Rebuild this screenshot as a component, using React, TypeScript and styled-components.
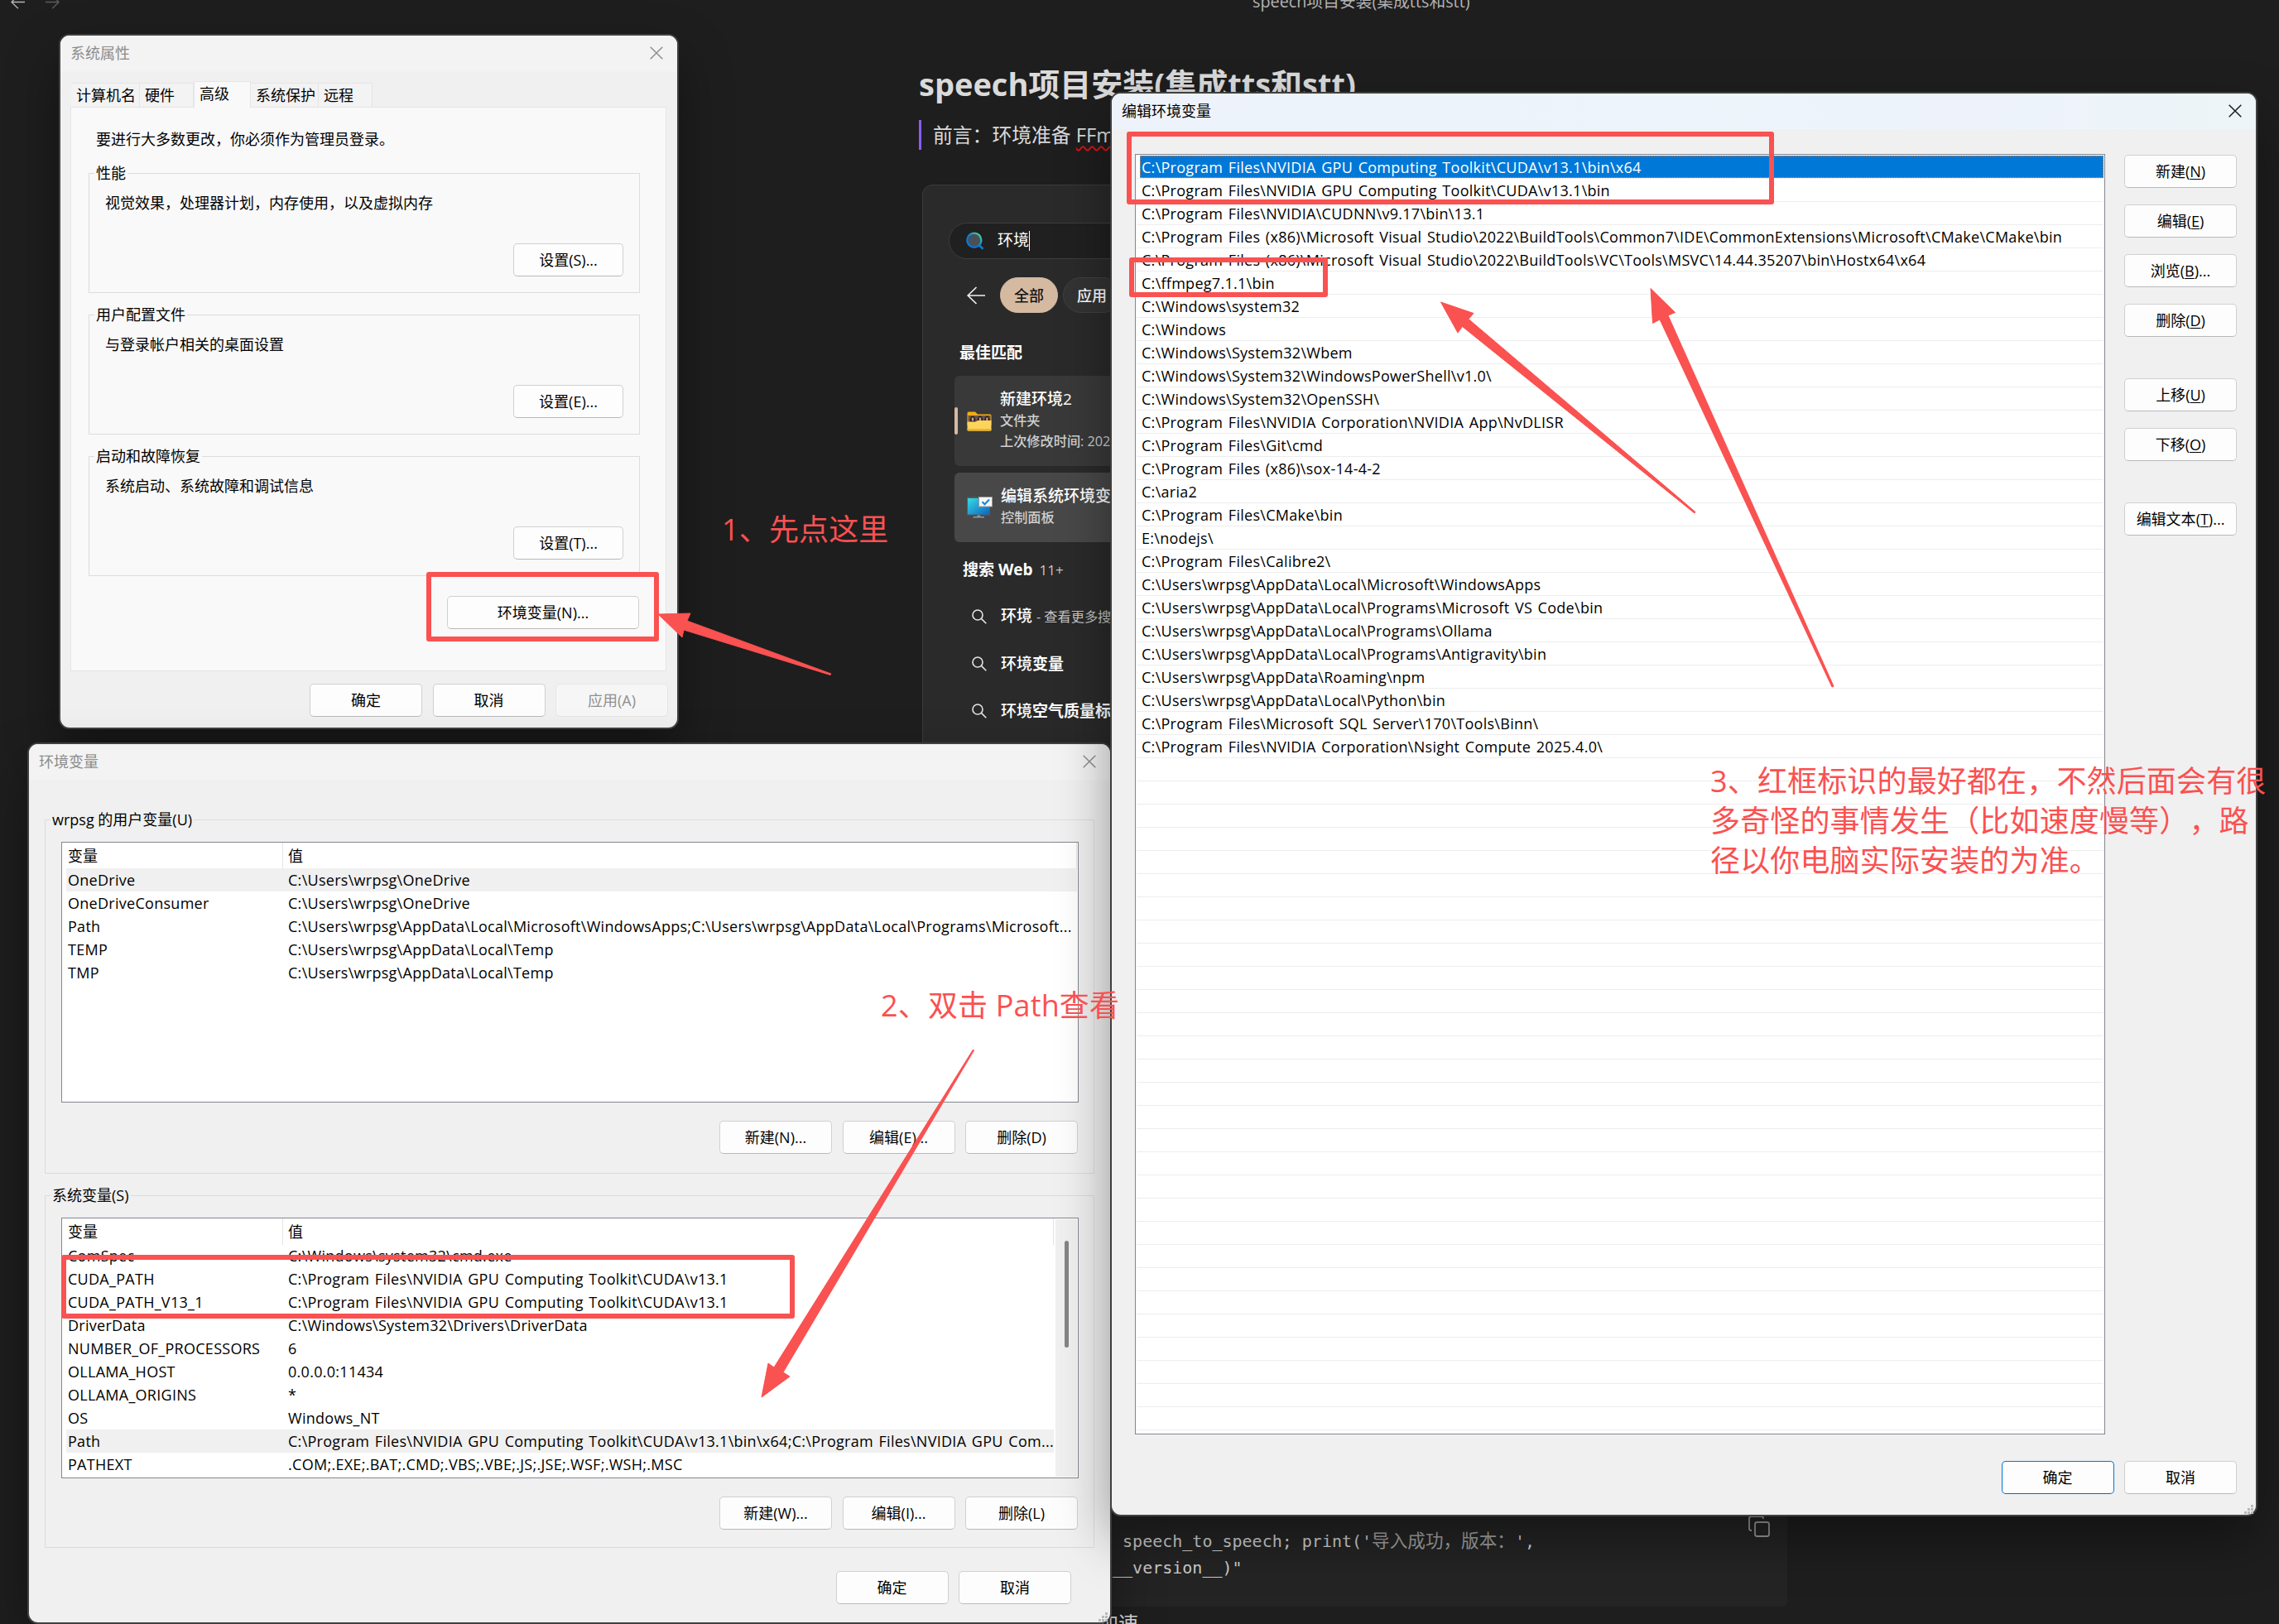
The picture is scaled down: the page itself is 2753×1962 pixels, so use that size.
import React, { useState } from "react";
import styled, { createGlobalStyle } from "styled-components";

// 用户变量 / 系统变量 / Path 数据 -----------------------------------------
type Variable = { name: string; value: string };

const UserVariables: Variable[] = [
  { name: "OneDrive", value: "C:\\Users\\wrpsg\\OneDrive" },
  { name: "OneDriveConsumer", value: "C:\\Users\\wrpsg\\OneDrive" },
  {
    name: "Path",
    value:
      "C:\\Users\\wrpsg\\AppData\\Local\\Microsoft\\WindowsApps;C:\\Users\\wrpsg\\AppData\\Local\\Programs\\Microsoft...",
  },
  { name: "TEMP", value: "C:\\Users\\wrpsg\\AppData\\Local\\Temp" },
  { name: "TMP", value: "C:\\Users\\wrpsg\\AppData\\Local\\Temp" },
];

const SystemVariables: Variable[] = [
  { name: "ComSpec", value: "C:\\Windows\\system32\\cmd.exe" },
  {
    name: "CUDA_PATH",
    value: "C:\\Program Files\\NVIDIA GPU Computing Toolkit\\CUDA\\v13.1",
  },
  {
    name: "CUDA_PATH_V13_1",
    value: "C:\\Program Files\\NVIDIA GPU Computing Toolkit\\CUDA\\v13.1",
  },
  { name: "DriverData", value: "C:\\Windows\\System32\\Drivers\\DriverData" },
  { name: "NUMBER_OF_PROCESSORS", value: "6" },
  { name: "OLLAMA_HOST", value: "0.0.0.0:11434" },
  { name: "OLLAMA_ORIGINS", value: "*" },
  { name: "OS", value: "Windows_NT" },
  {
    name: "Path",
    value:
      "C:\\Program Files\\NVIDIA GPU Computing Toolkit\\CUDA\\v13.1\\bin\\x64;C:\\Program Files\\NVIDIA GPU Com...",
  },
  {
    name: "PATHEXT",
    value: ".COM;.EXE;.BAT;.CMD;.VBS;.VBE;.JS;.JSE;.WSF;.WSH;.MSC",
  },
];

const PathEntries = [
  "C:\\Program Files\\NVIDIA GPU Computing Toolkit\\CUDA\\v13.1\\bin\\x64",
  "C:\\Program Files\\NVIDIA GPU Computing Toolkit\\CUDA\\v13.1\\bin",
  "C:\\Program Files\\NVIDIA\\CUDNN\\v9.17\\bin\\13.1",
  "C:\\Program Files (x86)\\Microsoft Visual Studio\\2022\\BuildTools\\Common7\\IDE\\CommonExtensions\\Microsoft\\CMake\\CMake\\bin",
  "C:\\Program Files (x86)\\Microsoft Visual Studio\\2022\\BuildTools\\VC\\Tools\\MSVC\\14.44.35207\\bin\\Hostx64\\x64",
  "C:\\ffmpeg7.1.1\\bin",
  "C:\\Windows\\system32",
  "C:\\Windows",
  "C:\\Windows\\System32\\Wbem",
  "C:\\Windows\\System32\\WindowsPowerShell\\v1.0\\",
  "C:\\Windows\\System32\\OpenSSH\\",
  "C:\\Program Files\\NVIDIA Corporation\\NVIDIA App\\NvDLISR",
  "C:\\Program Files\\Git\\cmd",
  "C:\\Program Files (x86)\\sox-14-4-2",
  "C:\\aria2",
  "C:\\Program Files\\CMake\\bin",
  "E:\\nodejs\\",
  "C:\\Program Files\\Calibre2\\",
  "C:\\Users\\wrpsg\\AppData\\Local\\Microsoft\\WindowsApps",
  "C:\\Users\\wrpsg\\AppData\\Local\\Programs\\Microsoft VS Code\\bin",
  "C:\\Users\\wrpsg\\AppData\\Local\\Programs\\Ollama",
  "C:\\Users\\wrpsg\\AppData\\Local\\Programs\\Antigravity\\bin",
  "C:\\Users\\wrpsg\\AppData\\Roaming\\npm",
  "C:\\Users\\wrpsg\\AppData\\Local\\Python\\bin",
  "C:\\Program Files\\Microsoft SQL Server\\170\\Tools\\Binn\\",
  "C:\\Program Files\\NVIDIA Corporation\\Nsight Compute 2025.4.0\\",
];

// 列表下面的空行
const EMPTY_ROWS = 29;

const Groups = [
  { title: "性能", text: "视觉效果，处理器计划，内存使用，以及虚拟内存", button: "设置(S)..." },
  { title: "用户配置文件", text: "与登录帐户相关的桌面设置", button: "设置(E)..." },
  { title: "启动和故障恢复", text: "系统启动、系统故障和调试信息", button: "设置(T)..." },
];

const Tabs = [
  { label: "计算机名", width: 83 },
  { label: "硬件", width: 65 },
  { label: "高级", width: 69 },
  { label: "系统保护", width: 82 },
  { label: "远程", width: 65 },
];
// ------------------------------------------------------------------------

const CloseIcon = ({ color }: { color: string }) => (
  <svg width="16" height="16" viewBox="0 0 16 16">
    <path d="M0.7 0.7L15.3 15.3M15.3 0.7L0.7 15.3" stroke={color} strokeWidth="1.5" />
  </svg>
);

const GripIcon = () => (
  <svg width="11" height="11" viewBox="0 0 11 11" fill="#b9b9b9">
    <path d="M8 0h3v3h-3zM4 4h3v3h-3zM8 4h3v3h-3zM0 8h3v3h-3zM4 8h3v3h-3zM8 8h3v3h-3z" />
  </svg>
);

const SearchIcon = () => (
  <svg width="18" height="18" viewBox="0 0 18 18" fill="none" stroke="#e4e4e4" strokeWidth="1.6">
    <circle cx="7" cy="7" r="6" />
    <path d="M11.4 11.4L17.3 17.3" />
  </svg>
);

const BingSearchIcon = () => (
  <svg width="22" height="22" viewBox="0 0 22 22" fill="none">
    <defs>
      <linearGradient id="lens" x1="0" y1="1" x2="1" y2="0">
        <stop offset="0.45" stopColor="#0a78d4" />
        <stop offset="0.75" stopColor="#2fb6b0" />
        <stop offset="1" stopColor="#62e07a" />
      </linearGradient>
    </defs>
    <path d="M15.5 16L20.5 20.8" stroke="#0a78d4" strokeWidth="2.8" />
    <circle cx="9.8" cy="10.2" r="8.6" fill="#48505a" stroke="url(#lens)" strokeWidth="2.2" />
  </svg>
);

const FolderIcon = () => (
  <svg width="30" height="24" viewBox="0 0 30 24">
    <path d="M0.5 2q0-1.5 1.5-1.5h8l3 3h15q1.5 0 1.5 1.500v12h-29z" fill="#f2ac16" />
    <path d="M1.500 5h27v9h-27z" fill="#6b5547" />
    <path d="M4 13q-1-7 3-7.500q4 .5 3 7.500zM13 13q-1-7 3-7.500q4 .5 3 7.500zM21.500 13q-1-7 3-7.500q3.500 .5 3 7.500z" fill="#2c211f" />
    <path d="M5.800 7.500h2.400v4h-2.400zM14.800 7.500h2.400v4h-2.400zM23.300 7.500h2.200v4h-2.200z" fill="#c79f8c" />
    <path d="M0.500 12.500h10l3-1.500h16v11q0 1.500-1.500 1.500h-26q-1.500 0-1.500-1.500z" fill="#fcd45c" />
    <path d="M0.500 21h29v1.200q0 1.300-1.500 1.300h-26q-1.500 0-1.500-1.300z" fill="#f0b52c" />
  </svg>
);

const MonitorIcon = () => (
  <svg width="31" height="26" viewBox="0 0 31 26">
    <defs>
      <linearGradient id="screen" x1="0" y1="0" x2="1" y2="1">
        <stop offset="0" stopColor="#35dbe6" />
        <stop offset="1" stopColor="#0d63bd" />
      </linearGradient>
    </defs>
    <rect x="0" y="0.500" width="28" height="22" rx="1" fill="#4f5f68" />
    <rect x="1" y="2" width="26" height="19.500" fill="url(#screen)" />
    <path d="M12.500 22.500h3.500v1.500h5v1.500h-13.500v-1.500h5z" fill="#8d9aa3" />
    <rect x="14.500" y="0.500" width="16" height="11.500" fill="#f6f6f6" stroke="#9a9a9a" />
    <path d="M18.500 6.200L21.500 9.200L27 3.500" fill="none" stroke="#1783d8" strokeWidth="2" />
  </svg>
);

const BackIcon = ({ color, size, flip }: { color: string; size: number; flip?: boolean }) => (
  <svg width={size} height={size} viewBox="0 0 22 22" fill="none" stroke={color} strokeWidth="1.7">
    <path
      d="M11.500 1L1.200 11L11.500 21M1.200 11H22"
      transform={flip ? "translate(22 0) scale(-1 1)" : undefined}
    />
  </svg>
);

const CopyIcon = () => (
  <svg width="26" height="26" viewBox="0 0 26 26" fill="none" stroke="#9b9b9b" strokeWidth="1.800">
    <rect x="8" y="8" width="17" height="17" rx="2.500" />
    <path d="M4 18H3.500Q1 18 1 15.500V3.500Q1 1 3.500 1H15.500Q18 1 18 3.500V4" />
  </svg>
);

const AccessLabel = ({ text, code, more }: { text: string; code: string; more?: boolean }) => (
  <span>
    {text}(<u>{code}</u>){more ? "..." : ""}
  </span>
);

type TableProps = { rows: Variable[]; active: number; scroll?: boolean };

const VariableTable: React.FC<TableProps> = ({ rows, active, scroll }) => (
  <Table>
    <TableMain>
      <TableHead>
        <HeadCell>变量</HeadCell>
        <HeadCell>值</HeadCell>
      </TableHead>
      {rows.map((row, index) => (
        <TableRow key={index} $active={index === active}>
          <span>{row.name}</span>
          <span>{row.value}</span>
        </TableRow>
      ))}
    </TableMain>
    {scroll && (
      <ScrollTrack>
        <ScrollThumb />
      </ScrollTrack>
    )}
  </Table>
);

const SystemProperties: React.FC = () => {
  const [selectedTab, setSelectedTab] = useState("高级");

  return (
    <SystemWindow>
      <TitleBar>
        系统属性
        <CloseIcon color="#8f8f8f" />
      </TitleBar>
      <TabBar>
        {Tabs.map((tab) => (
          <Tab
            key={tab.label}
            $width={tab.width}
            $selected={selectedTab === tab.label}
            onClick={() => setSelectedTab(tab.label)}
          >
            {tab.label}
          </Tab>
        ))}
      </TabBar>
      <TabPanel>
        <Notice>要进行大多数更改，你必须作为管理员登录。</Notice>
        {Groups.map((group) => (
          <SettingGroup key={group.title}>
            <Legend>{group.title}</Legend>
            <GroupText>{group.text}</GroupText>
            <ButtonRow $right={19}>
              <Button $width={133}>{group.button}</Button>
            </ButtonRow>
          </SettingGroup>
        ))}
        <ButtonRow $top={24} $right={32}>
          <Button $width={232}>环境变量(N)...</Button>
        </ButtonRow>
      </TabPanel>
      <ButtonRow $top={15} $right={11}>
        <Button>确定</Button>
        <Button>取消</Button>
        <Button disabled>应用(A)</Button>
      </ButtonRow>
    </SystemWindow>
  );
};

const EnvironmentVariables: React.FC = () => (
  <VariableWindow>
    <TitleBar>
      环境变量
      <CloseIcon color="#8f8f8f" />
    </TitleBar>
    <VariableBody>
      <VariableGroup $height={442}>
        <Legend>wrpsg 的用户变量(U)</Legend>
        <VariableTable rows={UserVariables} active={0} />
        <ButtonRow $top={22} $right={19}>
          <Button>新建(N)...</Button>
          <Button>编辑(E)...</Button>
          <Button>删除(D)</Button>
        </ButtonRow>
      </VariableGroup>
      <VariableGroup $height={440}>
        <Legend>系统变量(S)</Legend>
        <VariableTable rows={SystemVariables} active={8} scroll />
        <ButtonRow $top={22} $right={19}>
          <Button>新建(W)...</Button>
          <Button>编辑(I)...</Button>
          <Button>删除(L)</Button>
        </ButtonRow>
      </VariableGroup>
    </VariableBody>
    <ButtonRow $top={28} $right={47}>
      <Button>确定</Button>
      <Button>取消</Button>
    </ButtonRow>
    <Grip>
      <GripIcon />
    </Grip>
  </VariableWindow>
);

const EditPath: React.FC = () => {
  const [selected, setSelected] = useState(0);

  return (
    <PathWindow>
      <TitleBar $focused>
        编辑环境变量
        <CloseIcon color="#1c1c1c" />
      </TitleBar>
      <PathBody>
        <PathList>
          {PathEntries.map((entry, index) => (
            <PathRow key={entry} onClick={() => setSelected(index)}>
              <PathText $selected={index === selected}>{entry}</PathText>
            </PathRow>
          ))}
          {Array.from({ length: EMPTY_ROWS }, (_, index) => (
            <PathRow key={index} />
          ))}
        </PathList>
        <SideButtons>
          <ButtonColumn>
            <Button><AccessLabel text="新建" code="N" /></Button>
            <Button><AccessLabel text="编辑" code="E" /></Button>
            <Button><AccessLabel text="浏览" code="B" more /></Button>
            <Button><AccessLabel text="删除" code="D" /></Button>
          </ButtonColumn>
          <ButtonColumn>
            <Button><AccessLabel text="上移" code="U" /></Button>
            <Button><AccessLabel text="下移" code="O" /></Button>
          </ButtonColumn>
          <Button><AccessLabel text="编辑文本" code="T" more /></Button>
        </SideButtons>
      </PathBody>
      <ButtonRow $top={32} $right={23}>
        <Button $primary>确定</Button>
        <Button>取消</Button>
      </ButtonRow>
      <Grip>
        <GripIcon />
      </Grip>
    </PathWindow>
  );
};

// 笔记里嵌入的开始菜单搜索
const StartSearch: React.FC = () => (
  <StartPanel>
    <SearchBox>
      <BingSearchIcon />
      <SearchText>环境</SearchText>
    </SearchBox>
    <FilterRow>
      <BackIcon color="#f0f0f0" size={22} />
      <Pill $active>全部</Pill>
      <Pill>应用</Pill>
    </FilterRow>
    <PanelTitle>最佳匹配</PanelTitle>
    <ResultCard $height={109}>
      <Accent />
      <FolderIcon />
      <ResultInfo>
        <ResultName>新建环境2</ResultName>
        <ResultMeta>文件夹</ResultMeta>
        <ResultMeta>上次修改时间: 2026</ResultMeta>
      </ResultInfo>
    </ResultCard>
    <ResultCard $height={84} $hover>
      <Accent $hidden />
      <MonitorIcon />
      <ResultInfo>
        <ResultName>编辑系统环境变量</ResultName>
        <ResultMeta>控制面板</ResultMeta>
      </ResultInfo>
    </ResultCard>
    <WebTitle>
      搜索 Web <small>11+</small>
    </WebTitle>
    <WebRow>
      <SearchIcon />
      <span>
        环境 <small>- 查看更多搜</small>
      </span>
    </WebRow>
    <WebRow>
      <SearchIcon />
      <span>
        环境<b>变量</b>
      </span>
    </WebRow>
    <WebRow>
      <SearchIcon />
      <span>
        环境<b>空气质量标准</b>
      </span>
    </WebRow>
  </StartPanel>
);

const Note: React.FC = () => (
  <NotePage>
    <NoteBar>
      <BackIcon color="#b5b5b5" size={17} />
      <BackIcon color="#5c5c5c" size={17} flip />
      <NoteTab>speech项目安装(集成tts和stt)</NoteTab>
    </NoteBar>
    <NoteContent>
      <NoteTitle>speech项目安装(集成tts和stt)</NoteTitle>
      <Quote>
        前言：环境准备 <Misspelled>FFmpeg</Misspelled>
      </Quote>
      <StartSearch />
      <CodeBlock>
        <Code>
          <div>
            t speech_to_speech; print('<CodeText>导入成功，版本：</CodeText>',
          </div>
          <div>&nbsp;__version__)"</div>
        </Code>
        <CopyIcon />
      </CodeBlock>
      <NextLine>加速</NextLine>
    </NoteContent>
  </NotePage>
);

// 红框、箭头和说明文字
const Annotations: React.FC = () => (
  <>
    <Frame $x={515} $y={691} $w={281} $h={84} />
    <Frame $x={74} $y={1516} $w={886} $h={77} />
    <Frame $x={1361} $y={159} $w={782} $h={88} />
    <Frame $x={1364} $y={311} $w={240} $h={48} />
    <Arrows width="2753" height="1962" viewBox="0 0 2753 1962">
      <path d="M795 742L834 741L830 750L1004 814L1003 815.500L826 761L824 770Z" />
      <path d="M920 1688L928 1647L935 1652L1175.500 1268L1176.500 1269L946 1658L954 1663Z" />
      <path d="M1740.500 365L1780 378.500L1774 385.500L2048 618.500L2047 620L1766.500 394.500L1761 402Z" />
      <path d="M1994 348.500L2023.500 377.500L2015 381L2215 829L2213 830L2005 386L1996.500 390.500Z" />
    </Arrows>
    <Hint $x={872} $y={616}>1、先点这里</Hint>
    <Hint $x={1064} $y={1191}>2、双击 Path查看</Hint>
    <Hint $x={2066} $y={920}>
      3、红框标识的最好都在，不然后面会有很
      <br />
      多奇怪的事情发生（比如速度慢等），路
      <br />
      径以你电脑实际安装的为准。
    </Hint>
  </>
);

const App: React.FC = () => {
  return (
    <Desktop>
      <GlobalStyle />
      <Note />
      <SystemProperties />
      <EnvironmentVariables />
      <EditPath />
      <Annotations />
    </Desktop>
  );
};

export default App;

const GlobalStyle = createGlobalStyle`
  * {
    box-sizing: border-box;
  }

  body {
    margin: 0;
    overflow: hidden;
    background-color: #1e1e1e;
    font-family: "Open Sans", "Noto Sans CJK SC", sans-serif;
    font-size: 18px;
    line-height: 28px;
    text-spacing-trim: space-all;
    color: #000;
  }

  svg {
    flex-shrink: 0;
  }
`;

const Desktop = styled.div`
  position: relative;
  width: 2753px;
  height: 1962px;
  overflow: hidden;
  white-space: nowrap;
`;

// -------------------------------------------------------------------------------------------------------
// 笔记背景
const NotePage = styled.div`
  height: 100%;
  color: #dadada;
`;

// 顶部工具栏，只露出下半部分
const NoteBar = styled.div`
  height: 4px;
  display: flex;
  align-items: center;
  gap: 25px;
  padding-left: 13px;
`;

const NoteTab = styled.span`
  margin-left: 1416px;
  font-size: 19.8px;
  color: #b3b3b3;
`;

const NoteContent = styled.div`
  width: 2159px;
  padding-left: 1110px;
`;

const NoteTitle = styled.h1`
  margin: 72px 0 19px;
  font-size: 38px;
  font-weight: 700;
  line-height: 50px;
`;

const Quote = styled.div`
  height: 36px;
  padding-left: 14px;
  border-left: 3px solid #8a5cf5;
  font-size: 23.8px;
  line-height: 36px;
`;

const Misspelled = styled.span`
  text-decoration: underline wavy #e01010 1.5px;
  text-underline-offset: 4px;
`;

const CodeBlock = styled.div`
  display: flex;
  justify-content: space-between;
  height: 130px;
  margin-top: 588px;
  padding: 20px 21px 0 222px;
  border-radius: 6px;
  background-color: #242424;
`;

const Code = styled.div`
  padding-top: 15px;
  font-family: "DejaVu Sans Mono", "Noto Sans CJK SC", monospace;
  font-size: 20px;
  line-height: 31.5px;
  color: #cfcfcf;
`;

const CodeText = styled.span`
  font-size: 21.6px;
  color: #a2a2a2;
`;

const NextLine = styled.div`
  padding: 6px 0 0 217px;
  font-size: 24px;
`;

// -------------------------------------------------------------------------------------------------------
// 开始菜单搜索面板
const StartPanel = styled.div`
  width: 1045px;
  height: 1000px;
  margin: 42px 0 0 4px;
  padding: 45px 0 0 31px;
  border: 1px solid #3b3b3b;
  border-radius: 12px;
  background-color: #2a2a2a;
  color: #fff;
`;

const SearchBox = styled.div`
  display: flex;
  align-items: center;
  gap: 16px;
  width: 900px;
  height: 44px;
  padding-left: 20px;
  border: 1px solid #3d3d3d;
  border-radius: 22px;
  background-color: #202020;
`;

const SearchText = styled.span`
  height: 24px;
  line-height: 22px;
  font-size: 19px;
  border-right: 1.5px solid #fff;
`;

const FilterRow = styled.div`
  display: flex;
  align-items: center;
  gap: 6px;
  margin-top: 22px;
  padding-left: 22px;

  svg {
    margin-right: 12px;
  }
`;

const Pill = styled.div<{ $active?: boolean }>`
  display: flex;
  align-items: center;
  justify-content: center;
  width: 70px;
  height: 43px;
  border: 1px solid ${(props) => (props.$active ? "#d5baa1" : "#404040")};
  border-radius: 22px;
  background-color: ${(props) => (props.$active ? "#d5baa1" : "#333")};
  color: ${(props) => (props.$active ? "#161616" : "#fff")};
  font-weight: 500;
`;

const PanelTitle = styled.div`
  margin: 34px 0 14px 13px;
  font-size: 19px;
  font-weight: 700;
`;

const ResultCard = styled.div<{ $height: number; $hover?: boolean }>`
  display: flex;
  align-items: center;
  width: 880px;
  height: ${(props) => props.$height}px;
  margin: 0 0 8px 7px;
  border-radius: 6px;
  background-color: ${(props) => (props.$hover ? "#484848" : "#393939")};
`;

const Accent = styled.div<{ $hidden?: boolean }>`
  width: 4px;
  height: 33px;
  margin-right: 11px;
  border-radius: 2px;
  background-color: ${(props) => (props.$hidden ? "transparent" : "#d5baa1")};
`;

const ResultInfo = styled.div`
  margin-left: 10px;
  padding-bottom: 3px;
`;

const ResultName = styled.div`
  font-size: 19px;
  font-weight: 500;
`;

const ResultMeta = styled.div`
  font-size: 16.2px;
  font-weight: 500;
  line-height: 25px;
  color: #cfcfcf;
`;

const WebTitle = styled.div`
  margin: 19px 0 13px 17px;
  font-size: 19px;
  font-weight: 700;

  small {
    margin-left: 3px;
    font-size: 17px;
    font-weight: 400;
    color: #c4c4c4;
  }
`;

const WebRow = styled.div`
  display: flex;
  align-items: center;
  gap: 17px;
  height: 57px;
  padding-left: 28px;
  font-size: 19px;
  font-weight: 500;

  small {
    font-size: 16.2px;
    font-weight: 400;
    color: #c4c4c4;
  }
`;

// -------------------------------------------------------------------------------------------------------
// 窗口
const Window = styled.div`
  position: absolute;
  border-radius: 11px;
  background-color: #f0f0f0;
  box-shadow: 0 0 0 2px #404040, 0 28px 64px rgba(0, 0, 0, 0.4);
`;

const SystemWindow = styled(Window)`
  left: 73px;
  top: 43px;
  width: 745px;
  height: 836px;
`;

const VariableWindow = styled(Window)`
  left: 35px;
  top: 899px;
  width: 1306px;
  height: 1061px;
`;

const PathWindow = styled(Window)`
  left: 1343px;
  top: 113px;
  width: 1382px;
  height: 1717px;
`;

const TitleBar = styled.div<{ $focused?: boolean }>`
  display: flex;
  align-items: center;
  justify-content: space-between;
  height: 43px;
  padding: 0 17px 2px 12px;
  border-radius: 11px 11px 0 0;
  background: ${(props) =>
    props.$focused ? "linear-gradient(90deg, #eef3fb, #edf4fa 55%, #eef3fb 75%, #edf5f8)" : "#f3f3f3"};
  color: ${(props) => (props.$focused ? "#000" : "#8b8b8b")};
`;

const Button = styled.button<{ $width?: number; $primary?: boolean }>`
  display: flex;
  align-items: center;
  justify-content: center;
  width: ${(props) => props.$width ?? 136}px;
  height: 40px;
  padding: 0;
  border: 1px solid ${(props) => (props.$primary ? "#0078d4" : "#d0d0d0")};
  border-bottom-color: ${(props) => (props.$primary ? "#0067c0" : "#b9b9b9")};
  border-radius: 5px;
  background-color: #fdfdfd;
  font: inherit;
  color: #000;

  u {
    text-underline-offset: 2px;
  }

  &:disabled {
    border-color: #e6e6e6;
    background-color: #f6f6f6;
    color: #8f8f8f;
  }
`;

const ButtonRow = styled.div<{ $top?: number; $right?: number }>`
  display: flex;
  justify-content: flex-end;
  gap: 12.5px;
  margin-top: ${(props) => props.$top ?? 0}px;
  padding-right: ${(props) => props.$right ?? 0}px;
`;

const Grip = styled.div`
  position: absolute;
  right: 3px;
  bottom: 1px;
  display: flex;
`;

// -------------------------------------------------------------------------------------------------------
// 系统属性
const TabBar = styled.div`
  display: flex;
  align-items: flex-end;
  height: 43px;
  padding-left: 13px;
`;

const Tab = styled.div<{ $width: number; $selected: boolean }>`
  width: ${(props) => props.$width}px;
  height: ${(props) => (props.$selected ? 32 : 29)}px;
  margin-bottom: ${(props) => (props.$selected ? -1 : 0)}px;
  padding-left: 6px;
  border: 1px solid #e5e5e5;
  border-width: 1px 1px 0 ${(props) => (props.$selected ? 1 : 0)}px;
  background-color: ${(props) => (props.$selected ? "#f9f9f9" : "#f3f3f3")};
  line-height: 29px;
  z-index: ${(props) => (props.$selected ? 1 : 0)};
`;

const TabPanel = styled.div`
  height: 682px;
  margin: 0 13px 0 12px;
  padding: 24px 0 0 21px;
  border: 1px solid #e5e5e5;
  background-color: #f9f9f9;
`;

const Notice = styled.div`
  margin: 0 0 13px 9px;
`;

const Group = styled.fieldset`
  margin: 0 0 12px;
  padding: 0;
  border: 1px solid #dcdcdc;
`;

const SettingGroup = styled(Group)`
  width: 666px;
  height: 159px;

  &:last-of-type {
    margin-bottom: 0;
  }
`;

const Legend = styled.legend`
  height: 28px;
  margin-left: 6px;
  padding: 0 2px;
`;

const GroupText = styled.div`
  margin: 8px 0 35px 19px;
`;

// -------------------------------------------------------------------------------------------------------
// 环境变量
const VariableBody = styled.div`
  padding: 34px 19px 0;
`;

const VariableGroup = styled(Group)<{ $height: number }>`
  height: ${(props) => props.$height}px;

  &:last-child {
    margin-bottom: 0;
  }
`;

const Table = styled.div`
  display: flex;
  height: 315px;
  margin: 13px 18px 0 19px;
  border: 1px solid #828790;
  background-color: #fff;
`;

const TableMain = styled.div`
  flex: 1;
  padding: 0 1px 0 5px;
`;

const TableHead = styled.div`
  display: grid;
  grid-template-columns: 262px 1fr;
  height: 31px;
  line-height: 32px;
`;

const HeadCell = styled.div`
  padding-left: 2px;
  border-right: 1px solid #e5e5e5;

  & + & {
    padding-left: 6px;
  }
`;

const TableRow = styled.div<{ $active: boolean }>`
  display: grid;
  grid-template-columns: 266px 1fr;
  height: 28px;
  padding-left: 2px;
  background-color: ${(props) => (props.$active ? "#f0f0f0" : "transparent")};
  letter-spacing: 0.28px;
  word-spacing: 1.6px;
`;

const ScrollTrack = styled.div`
  width: 26px;
  margin: 1px;
  padding: 26px 0 0 11px;
  background-color: #f0f0f0;
`;

const ScrollThumb = styled.div`
  width: 5px;
  height: 129px;
  border-radius: 3px;
  background-color: #858585;
`;

// -------------------------------------------------------------------------------------------------------
// 编辑环境变量
const PathBody = styled.div`
  display: flex;
  gap: 23px;
  padding: 30px 0 0 28px;
`;

const PathList = styled.div`
  width: 1172px;
  height: 1547px;
  padding: 1px 1px 0;
  border: 1px solid #828790;
  background-color: #fff;
  overflow: hidden;
`;

const PathRow = styled.div`
  height: 28px;
  padding-left: 4px;
  border-bottom: 1px solid #ededed;
`;

const PathText = styled.div<{ $selected: boolean }>`
  height: 27px;
  padding-left: 2px;
  background-color: ${(props) => (props.$selected ? "#0078d7" : "transparent")};
  outline: ${(props) => (props.$selected ? "1px dotted #ff8728" : "none")};
  outline-offset: -1px;
  color: ${(props) => (props.$selected ? "#fff" : "#000")};
  letter-spacing: 0.28px;
  word-spacing: 1.6px;
`;

const SideButtons = styled.div`
  display: flex;
  flex-direction: column;
  gap: 50px;
  padding-top: 1px;
`;

const ButtonColumn = styled.div`
  display: flex;
  flex-direction: column;
  gap: 20px;
`;

// -------------------------------------------------------------------------------------------------------
// 标注
const Frame = styled.div<{ $x: number; $y: number; $w: number; $h: number }>`
  position: absolute;
  left: ${(props) => props.$x}px;
  top: ${(props) => props.$y}px;
  width: ${(props) => props.$w}px;
  height: ${(props) => props.$h}px;
  border: 6px solid #fa5151;
  border-radius: 3px;
`;

const Arrows = styled.svg`
  position: absolute;
  left: 0;
  top: 0;
  fill: #fa5151;
  stroke: #fa5151;
  stroke-width: 1;
  stroke-linejoin: round;
  pointer-events: none;
`;

const Hint = styled.div<{ $x: number; $y: number }>`
  position: absolute;
  left: ${(props) => props.$x}px;
  top: ${(props) => props.$y}px;
  font-size: 36px;
  line-height: 48px;
  letter-spacing: 0.15px;
  color: #fa5151;
`;
